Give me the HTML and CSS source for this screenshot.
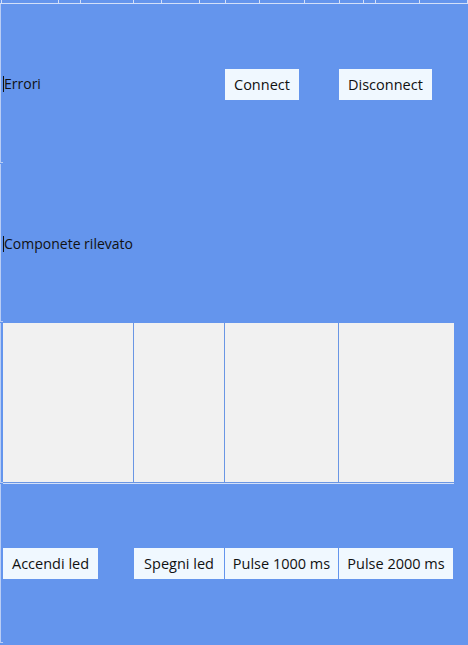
FILE: index.html
```html
<!DOCTYPE html>
<html lang="it">
<head>
  <meta charset="UTF-8" />
  <meta name="viewport" content="width=device-width, initial-scale=1.0"/>
  <title>Controllo led</title>
  <link rel="stylesheet" href="styles.css">
</head>
<body>

<div class="finestra">
  <div class="righello"></div>

  <!-- riga 1: errori + connessione -->
  <div class="gutter"></div>
  <div class="etichetta">Errori</div>
  <div class="cella"></div>
  <div class="cella"><button class="btn">Connect</button></div>
  <div class="cella"><button class="btn">Disconnect</button></div>
  <div class="cella"></div>

  <!-- riga 2: componente -->
  <div class="gutter"></div>
  <div class="etichetta etichetta-lunga">Componete rilevato</div>
  <div class="cella"></div>
  <div class="cella"></div>
  <div class="cella"></div>

  <!-- riga 3: tabella -->
  <div class="gutter"></div>
  <div class="tabella">
    <div class="col"></div>
    <div class="col"></div>
    <div class="col"></div>
    <div class="col ultima"></div>
  </div>
  <div class="cella"></div>

  <!-- riga 4: comandi led -->
  <div class="gutter ultima-riga"></div>
  <div class="cella comandi"><button class="btn">Accendi led</button></div>
  <div class="cella comandi"><button class="btn btn-piena">Spegni led</button></div>
  <div class="cella comandi"><button class="btn btn-piena">Pulse 1000 ms</button></div>
  <div class="cella comandi"><button class="btn btn-piena">Pulse 2000 ms</button></div>
  <div class="cella"></div>
</div>

</body>
</html>
```

FILE: styles.css
```css
body {
  margin: 0;
  background: #6495ed;
  font-family: "Open Sans", "Noto Sans", sans-serif;
  color: #111;
}
.finestra {
  display: grid;
  grid-template-columns: 3px 131px 91px 114px 115px 1fr;
  grid-template-rows: 4px 160px 159px 161px 161px;
  height: 645px;
  overflow: hidden;
}
/* righello in alto con le linee della griglia */
.righello {
  grid-column: 1 / -1;
  border-bottom: 1px solid #d3e0f9;
  background:
    linear-gradient(#d3e0f9, #d3e0f9) 1px 0 / 1px 3px no-repeat,
    linear-gradient(#d3e0f9, #d3e0f9) 58px 0 / 1px 3px no-repeat,
    linear-gradient(#d3e0f9, #d3e0f9) 80px 0 / 1px 3px no-repeat,
    linear-gradient(#d3e0f9, #d3e0f9) 133px 0 / 1px 3px no-repeat,
    linear-gradient(#d3e0f9, #d3e0f9) 161px 0 / 1px 3px no-repeat,
    linear-gradient(#d3e0f9, #d3e0f9) 199px 0 / 1px 3px no-repeat,
    linear-gradient(#d3e0f9, #d3e0f9) 225px 0 / 1px 3px no-repeat,
    linear-gradient(#d3e0f9, #d3e0f9) 259px 0 / 1px 3px no-repeat,
    linear-gradient(#d3e0f9, #d3e0f9) 304px 0 / 1px 3px no-repeat,
    linear-gradient(#d3e0f9, #d3e0f9) 339px 0 / 1px 3px no-repeat,
    linear-gradient(#d3e0f9, #d3e0f9) 363px 0 / 1px 3px no-repeat,
    linear-gradient(#d3e0f9, #d3e0f9) 375px 0 / 1px 3px no-repeat,
    linear-gradient(#d3e0f9, #d3e0f9) 419px 0 / 1px 3px no-repeat,
    linear-gradient(#d3e0f9, #d3e0f9) 467px 0 / 1px 3px no-repeat;
}
.gutter {
  box-shadow: inset 1px 0 0 #b9cdf5;
  border-bottom: 1px solid #b9cdf5;
  margin-bottom: 1px;
}
.ultima-riga { margin-bottom: 2px; }
.cella {
  display: flex;
  align-items: center;
}
.comandi {
  padding-bottom: 2px;
}
.etichetta {
  align-self: center;
  justify-self: start;
  border-left: 1px solid #111;
  font-size: 14px;
  line-height: 14px;
  padding: 1px 0 1px 0;
}
.etichetta-lunga {
  grid-column: 2 / 4;
}
.btn {
  height: 31px;
  padding: 0 9px;
  border: none;
  background: #f0f8ff;
  font-family: inherit;
  font-size: 14.5px;
  color: #111;
  cursor: pointer;
}
.btn-piena {
  flex: 1;
  margin-right: 1px;
  padding: 0 4px;
}
.tabella {
  grid-column: 2 / 6;
  display: grid;
  grid-template-columns: 131px 91px 114px 115px;
  border-bottom: 1px solid #d3e0f9;
}
.tabella .col {
  background: #f1f1f1;
  border-right: 1px solid #6a96e4;
  border-bottom: 1px solid #6a96e4;
}
.tabella .ultima {
  border-right: none;
}
```
